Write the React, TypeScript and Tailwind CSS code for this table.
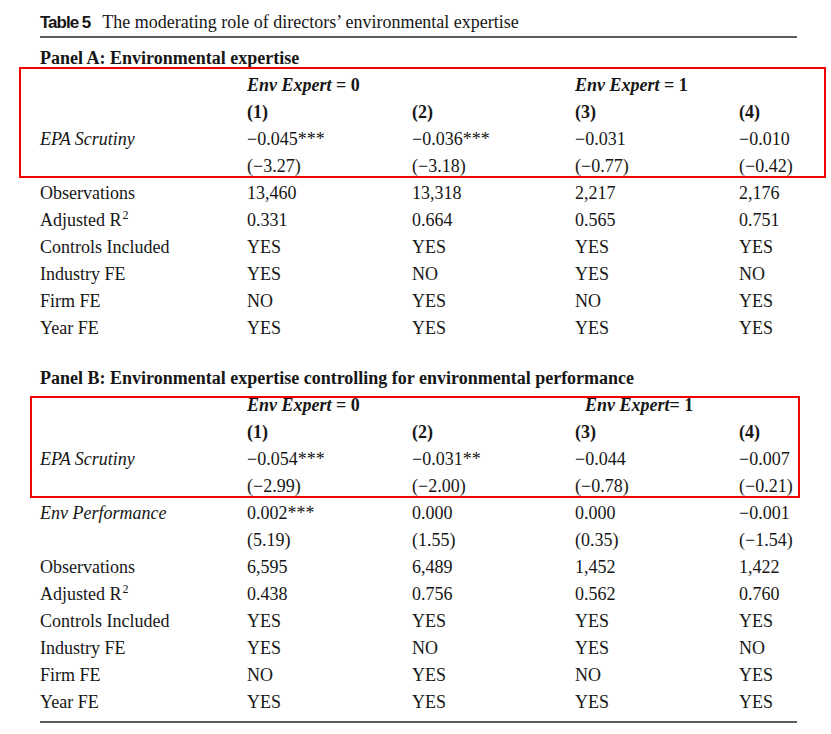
const serif = "font-['Liberation_Serif','Times_New_Roman',serif]";

type Row = { label: React.ReactNode; italic?: boolean; cells: string[] };

const adjR2 = (
  <>
    Adjusted R<sup className="text-[12px] relative -top-[7px] ml-[1px]">2</sup>
  </>
);

const panelA: Row[] = [
  { label: 'EPA Scrutiny', italic: true, cells: ['−0.045***', '−0.036***', '−0.031', '−0.010'] },
  { label: '', cells: ['(−3.27)', '(−3.18)', '(−0.77)', '(−0.42)'] },
  { label: 'Observations', cells: ['13,460', '13,318', '2,217', '2,176'] },
  { label: adjR2, cells: ['0.331', '0.664', '0.565', '0.751'] },
  { label: 'Controls Included', cells: ['YES', 'YES', 'YES', 'YES'] },
  { label: 'Industry FE', cells: ['YES', 'NO', 'YES', 'NO'] },
  { label: 'Firm FE', cells: ['NO', 'YES', 'NO', 'YES'] },
  { label: 'Year FE', cells: ['YES', 'YES', 'YES', 'YES'] },
];

const panelB: Row[] = [
  { label: 'EPA Scrutiny', italic: true, cells: ['−0.054***', '−0.031**', '−0.044', '−0.007'] },
  { label: '', cells: ['(−2.99)', '(−2.00)', '(−0.78)', '(−0.21)'] },
  { label: 'Env Performance', italic: true, cells: ['0.002***', '0.000', '0.000', '−0.001'] },
  { label: '', cells: ['(5.19)', '(1.55)', '(0.35)', '(−1.54)'] },
  { label: 'Observations', cells: ['6,595', '6,489', '1,452', '1,422'] },
  { label: adjR2, cells: ['0.438', '0.756', '0.562', '0.760'] },
  { label: 'Controls Included', cells: ['YES', 'YES', 'YES', 'YES'] },
  { label: 'Industry FE', cells: ['YES', 'NO', 'YES', 'NO'] },
  { label: 'Firm FE', cells: ['NO', 'YES', 'NO', 'YES'] },
  { label: 'Year FE', cells: ['YES', 'YES', 'YES', 'YES'] },
];

const grid = 'grid grid-cols-[207px_165px_163px_164px_1fr] h-[27px] items-center leading-[27px]';

function DataRow({ row }: { row: Row }) {
  return (
    <div className={grid}>
      <div className={row.italic ? 'italic' : ''}>{row.label}</div>
      {row.cells.map((c, i) => (
        <div key={i}>{c}</div>
      ))}
    </div>
  );
}

function HeaderRows({ tight }: { tight?: boolean }) {
  return (
    <>
      <div className={grid + ' font-bold'}>
        <div />
        <div className="col-span-2">
          <i>Env Expert</i> = 0
        </div>
        <div className={tight ? 'col-span-2 pl-[10px]' : 'col-span-2'}>
          <i>Env Expert</i>{tight ? '= 1' : ' = 1'}
        </div>
      </div>
      <div className={grid + ' font-bold'}>
        <div />
        <div>(1)</div>
        <div>(2)</div>
        <div>(3)</div>
        <div>(4)</div>
      </div>
    </>
  );
}

export default function App() {
  return (
    <div className={`w-[831px] h-[734px] bg-white text-[#161616] ${serif} text-[18px] overflow-hidden`}>
      <div className="ml-[40px] w-[757px]">
        <div className="mt-[12px] h-[20px] leading-[20px] flex items-baseline whitespace-nowrap">
          <span className="font-['Liberation_Sans',Arial,sans-serif] font-bold text-[17px] tracking-[-1px]">Table 5</span>
          <span className="ml-[12px]">The moderating role of directors’ environmental expertise</span>
        </div>
        <div className="mt-[4px] h-[2px] bg-[#5c5c5c]" />

        <div className="mt-[10px] h-[20px] leading-[20px] font-bold">Panel A: Environmental expertise</div>
        <div className="mt-[3.5px] relative">
          <HeaderRows />
          {panelA.map((r, i) => (
            <DataRow key={i} row={r} />
          ))}
          <div className="absolute -top-[4.5px] -left-[21px] w-[807px] h-[111px] border-2 border-[#f20000] pointer-events-none" />
        </div>

        <div className="mt-[26.5px] h-[20px] leading-[20px] font-bold">
          Panel B: Environmental expertise controlling for environmental performance
        </div>
        <div className="mt-[3.5px] relative">
          <HeaderRows tight />
          {panelB.map((r, i) => (
            <DataRow key={i} row={r} />
          ))}
          <div className="absolute top-[4.5px] -left-[10px] w-[770px] h-[102px] border-2 border-[#f20000] pointer-events-none" />
        </div>
        <div className="mt-[5px] h-[2px] bg-[#5c5c5c]" />
      </div>
    </div>
  );
}
